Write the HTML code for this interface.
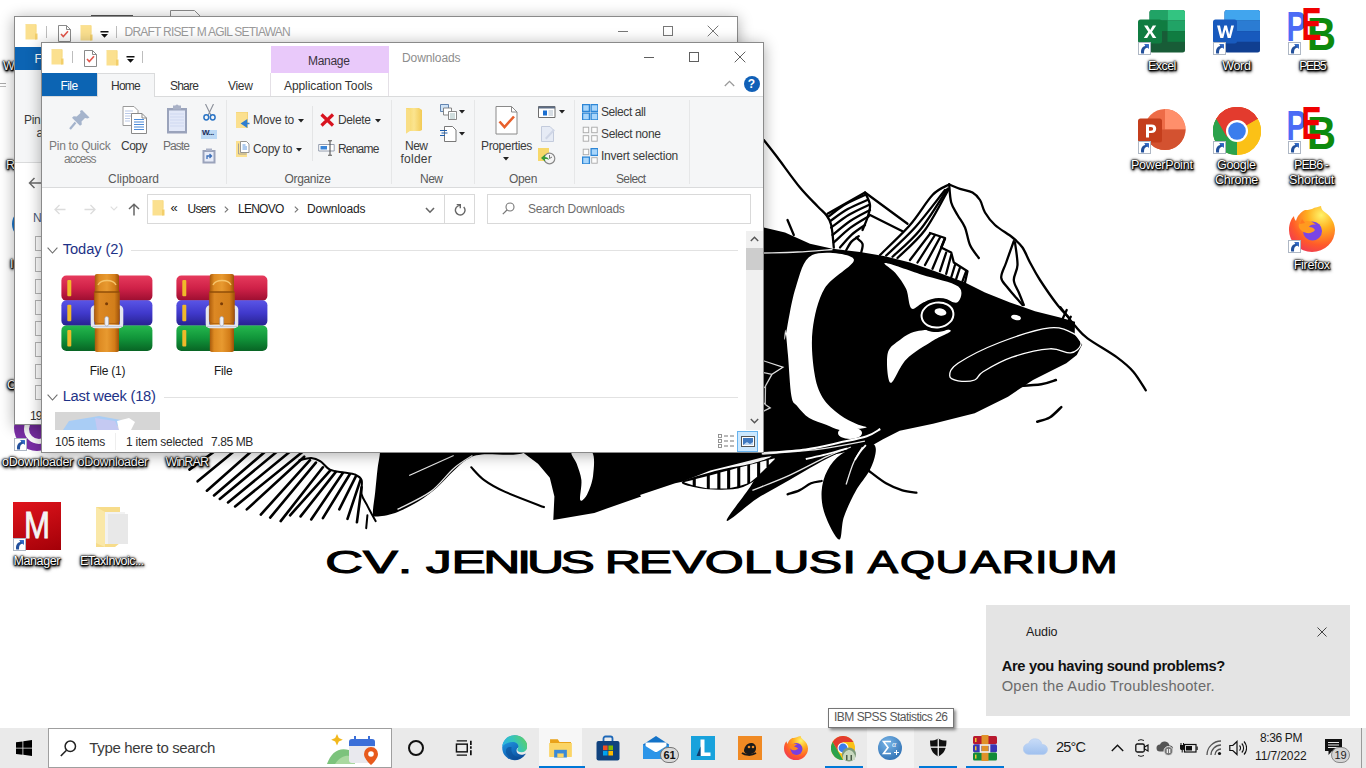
<!DOCTYPE html>
<html lang="en">
<head>
<meta charset="utf-8">
<title>Desktop</title>
<style>
*{box-sizing:border-box;margin:0;padding:0}
html,body{width:1366px;height:768px;overflow:hidden;background:#fff}
body{position:relative;font-family:"Liberation Sans",sans-serif;font-size:12px;color:#1e1e1e}
.abs{position:absolute}
.t{position:absolute;white-space:nowrap;line-height:1}
/* desktop icon label */
.dlab{color:#fff;text-shadow:0 0 1px #000,0 0 2px #000,0 1px 2px #000,1px 1px 1px #000,0 0 3px #000,1px 2px 3px rgba(0,0,0,.9),0 1px 4px rgba(0,0,0,.6)}
.dl{position:absolute;white-space:nowrap;color:#fff;font-size:12.5px;line-height:15px;text-align:center;
 text-shadow:0 0 2px #000,0 0 2px #000,0 1px 2px #000,1px 1px 1px #000,0 0 3px #000}
.sc{position:absolute;width:11px;height:11px;background:#fff;border:1px solid #9aa;}
.sc:after{content:"";position:absolute;left:2px;top:2px;width:5px;height:5px;border-top:2px solid #1d5fb4;border-right:2px solid #1d5fb4}
/* windows */
.win{position:absolute;background:#fff;border:1px solid #8a8a8a;box-shadow:0 2px 14px rgba(0,0,0,.33)}
.rl{color:#444}
.gl{color:#5d5d5d}
.sep{position:absolute;width:1px;background:#e2e3e4}
/* taskbar */
#tb{position:absolute;left:0;top:728px;width:1366px;height:40px;background:#e9e9e9}
</style>
</head>
<body>
<svg class="abs" style="left:0;top:0" width="1366" height="768" viewBox="0 0 1366 768">
<g fill="#000">
<path d="M740.0 222.5 L763.8 227.5 L785.0 232.5 L810.0 243.8 L832.5 248.8 L860.0 252.0 L885.0 256.2 L910.0 262.5 L935.0 271.2 L965.0 282.5 L985.0 292.5 L1010.0 302.5 L1035.0 311.2 L1060.0 317.5 L1075.0 321.8 L1074.7 334.2 L1082.2 344.6 L1076.8 355.0 L1066.3 363.3 L1033.0 380.0 L1008.0 396.7 L974.7 413.3 L933.0 423.8 L899.7 430.8 L883.0 439.2 L866.3 448.8 L846 452 L800 462 L778.2 455.2 L761.8 457.6 L738.4 463.4 L710.3 470.5 L682.2 481.7 L675.1 483.3 L640.0 495.1 L641.1 496.5 L594.3 512.9 L553.3 520.0 L554.4 496.5 L549.8 477.8 L538.0 463.7 L524.0 453.2 L500 440 L480 300 L600 240 L700 228Z"/>
<path d="M381.1 430.9 C356.3 434.6 380.5 446.9 379.9 453.2 C379.3 459.4 378.4 461.9 377.6 468.4 C376.8 474.8 376.0 484.5 375.2 491.9 C374.4 499.3 372.7 508.8 372.9 512.9 C373.1 517.0 372.7 516.4 376.4 516.4 C380.1 516.4 388.1 515.4 395.1 512.9 C402.1 510.4 411.6 505.5 418.6 501.2 C425.6 496.9 431.5 492.3 437.3 487.2 C443.1 482.1 448.6 475.5 453.7 470.8 C458.8 466.1 463.1 461.8 467.8 459.1 C472.5 456.4 472.4 455.5 481.8 454.4 C491.2 453.3 516.2 456.6 524.0 452.7 C531.8 448.8 552.5 434.5 528.7 430.9 C504.9 427.3 405.9 427.2 381.1 430.9Z"/>
<path d="M864.9 440.0 C854.8 440.5 806.1 446.5 789.9 449.8 C773.7 453.1 774.3 453.7 767.7 459.9 C761.1 466.1 756.9 476.8 750.1 486.9 C743.3 497.0 725.5 518.8 726.7 520.8 C727.9 522.8 746.6 505.4 757.1 498.6 C767.6 491.8 779.8 485.7 789.9 479.8 C800.0 473.9 807.9 468.9 818.0 463.4 C828.1 457.9 843.0 450.9 850.8 447.0 C858.6 443.1 875.0 439.5 864.9 440.0Z"/>
<path d="M864.9 443.5 C859.4 445.1 847.8 449.6 841.5 454.1 C835.2 458.6 830.7 464.3 827.4 470.5 C824.1 476.7 822.0 484.1 821.6 491.5 C821.2 498.9 822.2 507.0 825.1 515.0 C828.0 523.0 836.0 539.2 839.1 539.6 C842.2 540.0 841.1 525.3 843.8 517.3 C846.5 509.3 851.2 499.3 855.5 491.5 C859.8 483.7 866.3 476.7 869.6 470.5 C872.9 464.3 874.6 458.4 875.4 454.1 C876.2 449.8 876.0 446.5 874.3 444.7 C872.5 442.9 870.4 441.9 864.9 443.5Z"/>
<path d="M682.2 481.7 C679.1 484.6 692.0 486.7 698.6 488.0 C705.2 489.3 714.6 489.9 722.0 489.7 C729.4 489.5 736.5 489.3 743.1 486.9 C749.7 484.5 755.9 480.2 761.8 475.1 C767.6 470.0 779.8 458.3 778.2 456.4 C776.6 454.4 762.5 461.0 752.4 463.4 C742.2 465.8 729.0 467.4 717.3 470.5 C705.6 473.6 685.3 478.8 682.2 481.7Z"/>
</g><g fill="#fff">
<path d="M812.2 255.0 C802.5 259.9 800.0 274.4 795.5 288.3 C791.0 302.2 786.8 331.4 785.1 338.3 C783.4 345.2 785.0 327.1 785.5 330.0 C786.0 332.9 787.0 344.4 788.0 355.4 C789.0 366.4 789.9 387.5 791.4 396.0 C792.9 404.5 794.3 402.5 797.3 406.2 C800.3 409.9 804.4 414.9 809.2 418.0 C814.0 421.1 821.0 422.8 826.1 424.8 C831.2 426.8 834.6 429.2 839.7 429.9 C844.8 430.6 852.1 429.4 856.6 429.0 C861.1 428.6 866.7 428.1 866.7 427.3 C866.7 426.5 861.1 426.1 856.6 424.0 C852.1 421.9 845.4 419.1 839.7 414.7 C834.1 410.3 826.9 404.8 822.7 397.7 C818.5 390.6 816.0 383.6 814.3 372.3 C812.6 361.0 810.9 344.0 812.6 330.0 C814.3 316.0 817.8 300.1 824.7 288.3 C831.6 276.5 855.9 264.8 853.8 259.2 C851.7 253.6 821.9 250.2 812.2 255.0Z"/>
<path d="M885.4 263.0 C889.8 263.2 909.8 270.8 921.9 274.7 C934.0 278.6 952.3 281.9 958.3 286.5 C964.3 291.1 960.4 299.9 957.8 302.1 C955.2 304.3 948.2 299.5 942.7 299.5 C937.2 299.5 929.7 300.6 924.5 302.1 C919.3 303.6 914.5 310.8 911.5 308.6 C908.5 306.4 908.8 295.0 906.2 289.1 C903.6 283.2 899.3 277.8 895.8 273.4 C892.3 269.0 881.0 262.8 885.4 263.0Z"/>
<path d="M916.7 331.2 C925.4 329.4 947.9 328.5 950.5 330.2 C953.1 331.9 939.7 336.2 932.3 341.1 C924.9 346.0 913.2 352.4 906.2 359.4 C899.2 366.3 893.7 383.7 890.6 382.8 C887.5 381.9 886.2 361.1 887.5 354.2 C888.8 347.2 893.5 344.9 898.4 341.1 C903.3 337.3 908.0 333.0 916.7 331.2Z"/>
<path d="M572.0 452.0 C574.5 450.1 588.4 448.1 591.9 452.0 C595.4 455.9 593.9 468.5 593.1 475.5 C592.3 482.5 589.4 490.1 587.2 494.2 C585.1 498.3 581.2 502.5 580.2 500.1 C579.2 497.8 582.0 486.2 581.4 480.1 C580.8 474.0 578.3 468.4 576.7 463.7 C575.1 459.0 569.5 453.9 572.0 452.0Z"/>
<path d="M684.5 482.0 L692.7 479.9 L692.7 485.3 L684.5 482.4Z"/>
<path d="M695.8 479.1 L706.8 476.2 L706.8 488.3 L695.8 486.1Z"/>
<path d="M709.8 475.4 L717.3 473.4 L717.3 488.5 L709.8 488.5Z"/>
<path d="M720.4 472.6 L727.1 470.8 L727.1 488.4 L720.4 488.5Z"/>
<path d="M730.2 470.0 L737.2 468.1 L737.2 486.6 L730.2 488.0Z"/>
<path d="M740.3 467.3 L747.3 465.5 L747.3 483.5 L740.3 485.8Z"/>
<path d="M750.1 464.7 L757.1 462.9 L757.1 476.8 L750.1 482.4Z"/>
<path d="M760.2 462.1 L766.5 460.4 L766.5 467.4 L760.2 473.7Z"/>
<path d="M768.8 459.8 L774.7 458.3 L774.7 459.2 L768.8 465.1Z"/>
<ellipse cx="850" cy="433" rx="12" ry="6"/>
<ellipse cx="1016" cy="317.5" rx="5" ry="2.5" transform="rotate(15 1016 317.5)"/>
</g>
<ellipse cx="937.5" cy="315" rx="21" ry="17" fill="#000" transform="rotate(-8 937.5 315)"/><ellipse cx="937.5" cy="315" rx="16" ry="12.5" fill="none" stroke="#fff" stroke-width="2" transform="rotate(-8 937.5 315)"/><ellipse cx="940.5" cy="312" rx="6" ry="3.6" fill="#fff" transform="rotate(12 940.5 312)"/>
<path d="M949.7 375.8 C949.7 372.9 949.7 368.9 958.0 363.3 C966.3 357.8 984.4 348.4 999.7 342.5 C1015.0 336.6 1037.2 329.3 1049.7 327.9 C1062.2 326.5 1069.5 331.4 1074.7 334.2 C1079.9 337.0 1081.6 341.5 1080.9 344.6 C1080.2 347.7 1075.7 352.2 1070.5 352.9 C1065.3 353.6 1059.4 348.1 1049.7 348.8 C1040.0 349.5 1023.3 353.3 1012.2 357.1 C1001.1 360.9 989.2 367.9 983.0 371.7 C976.8 375.5 978.9 378.5 974.7 380.0 C970.5 381.5 962.2 381.5 958.0 380.8 C953.8 380.1 949.7 378.7 949.7 375.8Z" fill="none" stroke="#fff" stroke-width="1.3"/>
<path d="M409.2 475.5 L453.7 455.5" fill="none" stroke="#e6e6e6" stroke-width="1.3"/>
<path d="M397.5 509.4 C403.0 506.5 420.9 498.7 430.3 491.9 C439.7 485.1 446.7 474.5 453.7 468.4 C460.7 462.3 469.3 457.6 472.4 455.5" fill="none" stroke="#e6e6e6" stroke-width="1.3"/>
<path d="M761.8 454.1 C771.2 453.3 800.8 451.5 818.0 449.4 C835.2 447.2 857.1 442.6 864.9 441.2" fill="none" stroke="#e6e6e6" stroke-width="1.3"/>
<path d="M752.4 490.4 C758.6 487.8 777.4 480.8 789.9 475.1 C802.4 469.4 817.2 461.1 827.4 456.4 C837.5 451.7 846.9 448.6 850.8 447.0" fill="none" stroke="#e6e6e6" stroke-width="1.3"/>
<path d="M846.1 484.5 C847.3 481.0 850.5 469.6 853.2 463.4 C855.9 457.1 861.0 449.7 862.5 447.0" fill="none" stroke="#e6e6e6" stroke-width="1.3"/>
<path d="M763.8 253.0 C769.4 252.8 786.0 252.6 797.5 252.0 C809.0 251.4 826.7 249.9 832.5 249.5" fill="none" stroke="#e6e6e6" stroke-width="1.3"/>
<path d="M762.6 360.5 L782.9 367.2 L771.9 374.4 L762.6 372.3" fill="none" stroke="#e6e6e6" stroke-width="1.3"/>
<path d="M771.9 374.4 L765.5 385.9 L765.2 404.5 L770.2 407.9 L762.6 411.6" fill="none" stroke="#e6e6e6" stroke-width="1.3"/>
<path d="M762.6 388.4 L765.5 386.7" fill="none" stroke="#e6e6e6" stroke-width="1.3"/>
<path d="M762.6 402.8 L765.2 403.6" fill="none" stroke="#e6e6e6" stroke-width="1.3"/>
<path d="M761.8 453.1 C769.1 452.5 792.8 451.1 805.8 449.4 C818.8 447.6 829.6 444.8 839.7 442.6 C849.9 440.4 859.9 438.6 866.7 436.3 C873.5 434.0 878.0 430.2 880.3 429.0" fill="none" stroke="#fff" stroke-width="2.0"/>
<path d="M805.8 459.0 C809.2 458.2 819.2 456.1 826.1 454.4 C833.0 452.6 843.8 449.5 847.3 448.5" fill="none" stroke="#fff" stroke-width="1.8"/>
<path d="M854.9 460.0 C855.8 458.6 858.2 454.4 860.0 451.9 C861.8 449.4 864.9 446.2 865.9 445.1" fill="none" stroke="#fff" stroke-width="1.8"/>
<g fill="none" stroke="#000" stroke-linecap="round" stroke-linejoin="round">
<path d="M763.8 140.0 C766.1 142.9 771.5 149.6 777.5 157.5 C783.5 165.4 793.3 179.4 800.0 187.5 C806.7 195.6 813.1 201.6 817.5 206.2 C821.9 210.8 823.9 211.9 826.2 215.0 C828.5 218.1 829.9 219.6 831.2 225.0 C832.5 230.4 833.4 243.8 833.8 247.5" stroke-width="2.3"/>
<path d="M827.5 213.8 L865.0 192.5 L907.5 223.8" stroke-width="2.3"/>
<path d="M870.0 215.0 L902.5 231.2" stroke-width="2.3"/>
<path d="M828.8 216.2 C831.6 214.2 839.9 207.6 845.9 204.1 C851.9 200.6 861.8 196.5 865.0 195.0" stroke-width="2.3"/>
<path d="M830.0 221.2 C833.0 219.2 841.5 212.6 847.8 209.1 C854.0 205.6 864.2 201.5 867.5 200.0" stroke-width="2.3"/>
<path d="M831.2 227.5 C834.2 225.4 842.7 218.6 849.0 214.8 C855.3 211.1 865.5 206.6 868.8 205.0" stroke-width="2.3"/>
<path d="M832.5 235.0 C835.5 232.7 844.0 225.2 850.2 221.0 C856.5 216.8 866.7 211.8 870.0 210.0" stroke-width="2.3"/>
<path d="M833.8 242.5 C836.5 240.1 844.4 232.3 850.2 227.9 C856.0 223.5 865.7 218.1 868.8 216.2" stroke-width="2.3"/>
<path d="M840.0 247.5 C841.9 245.4 847.3 238.6 851.5 234.8 C855.7 231.1 862.8 226.6 865.0 225.0" stroke-width="2.3"/>
<path d="M846.2 250.0 C847.1 248.6 849.4 243.9 851.5 241.6 C853.6 239.3 857.6 237.1 858.8 236.2" stroke-width="2.3"/>
<path d="M865.0 192.5 C865.8 194.6 869.6 200.8 870.0 205.0 C870.4 209.2 868.8 213.3 867.5 217.5 C866.2 221.7 863.3 227.9 862.5 230.0" stroke-width="2.3"/>
<path d="M856.2 237.5 C857.2 238.6 861.7 241.3 862.5 243.8 C863.3 246.3 861.4 251.1 861.2 252.5" stroke-width="2.3"/>
<path d="M880.0 255.0 C885.0 250.0 901.2 235.0 910.0 225.0 C918.8 215.0 926.0 201.8 932.5 195.0 C939.0 188.2 946.4 186.2 949.2 184.5" stroke-width="2.3"/>
<path d="M886.2 255.5 C891.0 250.8 905.2 238.4 915.0 227.5 C924.8 216.6 940.0 196.2 945.0 190.0" stroke-width="2.3"/>
<path d="M892.5 256.8 C897.1 252.3 910.8 241.3 920.0 230.0 C929.2 218.7 942.9 195.7 947.5 188.8" stroke-width="2.3"/>
<path d="M897.5 258.0 C902.1 253.3 916.5 241.5 925.0 230.0 C933.5 218.5 944.8 195.7 948.8 188.8" stroke-width="2.3"/>
<path d="M949.2 184.5 C949.5 187.5 949.8 197.4 951.2 202.5 C952.6 207.6 955.2 210.8 957.5 215.0 C959.8 219.2 962.9 222.5 965.0 227.5 C967.1 232.5 967.7 239.9 970.0 245.0 C972.3 250.1 977.3 255.8 978.8 258.0" stroke-width="2.3"/>
<path d="M949.2 184.5 C951.0 185.2 956.1 187.5 960.0 188.8 C963.9 190.1 969.2 190.6 972.5 192.5 C975.8 194.4 977.9 196.7 980.0 200.0 C982.1 203.3 982.5 208.3 985.0 212.5 C987.5 216.7 990.4 220.8 995.0 225.0 C999.6 229.2 1007.9 233.8 1012.5 237.5 C1017.1 241.2 1019.6 243.3 1022.5 247.5 C1025.4 251.7 1027.1 257.1 1030.0 262.5 C1032.9 267.9 1035.4 272.9 1040.0 280.0 C1044.6 287.1 1052.7 298.8 1057.5 305.0 C1062.3 311.2 1066.9 315.4 1068.8 317.5" stroke-width="2.3"/>
<path d="M1013.8 241.2 C1012.5 244.8 1008.3 256.4 1006.2 262.5 C1004.1 268.6 1001.0 273.3 1001.2 277.5 C1001.4 281.7 1004.0 282.9 1007.5 287.5 C1011.0 292.1 1020.0 302.1 1022.5 305.0" stroke-width="2.3"/>
<path d="M1015.0 242.5 C1015.4 246.2 1017.7 258.8 1017.5 265.0 C1017.3 271.2 1013.6 275.4 1013.8 280.0 C1014.0 284.6 1017.1 288.3 1018.8 292.5 C1020.5 296.7 1023.0 302.9 1023.8 305.0" stroke-width="2.3"/>
<path d="M1060.4 307.1 C1062.8 310.2 1070.5 320.6 1075.0 325.8 C1079.5 331.0 1080.5 333.1 1087.5 338.3 C1094.5 343.5 1109.1 351.5 1116.7 357.1 C1124.3 362.7 1128.5 366.1 1133.3 371.7 C1138.1 377.2 1143.7 387.3 1145.8 390.4" stroke-width="2.3"/>
<path d="M1066.7 310.0 L1061.7 320.8" stroke-width="2.3"/>
<path d="M1070.8 316.7 L1065.8 325.8" stroke-width="2.3"/>
<path d="M930.0 233.8 L910.0 260.0" stroke-width="2.3"/>
<path d="M935.0 235.0 L917.5 262.5" stroke-width="2.3"/>
<path d="M940.0 237.5 L925.0 265.0" stroke-width="2.3"/>
<path d="M945.0 238.8 L932.5 268.8" stroke-width="2.3"/>
<path d="M946.2 252.5 L940.0 271.2" stroke-width="2.3"/>
<path d="M951.2 255.0 L946.2 273.8" stroke-width="2.3"/>
<path d="M955.0 265.0 L951.2 277.5" stroke-width="2.3"/>
<path d="M960.0 267.5 L956.2 278.8" stroke-width="2.3"/>
<path d="M966.2 271.2 L962.5 281.2" stroke-width="2.3"/>
<path d="M930.0 233.0 L945.0 238.0 L941.2 247.5 L951.2 252.5 L953.8 262.5 L967.5 271.2 L965.0 282.5" stroke-width="2.3"/>
<path d="M787.5 220.0 L793.8 235.0" stroke-width="2.3"/>
<path d="M1016.3 386.2 C1020.5 385.9 1034.7 385.2 1041.3 384.2 C1047.9 383.2 1053.5 380.7 1055.9 380.0" stroke-width="2.5"/>
<path d="M1037.2 421.7 C1039.3 421.0 1045.7 419.9 1049.7 417.5 C1053.7 415.1 1059.4 408.8 1061.3 407.1" stroke-width="2.5"/>
<path d="M216.8 449.8 L189.4 469.6" stroke-width="2.6"/>
<path d="M240.2 446.3 L197.6 481.3" stroke-width="2.6"/>
<path d="M260.2 443.5 L206.9 490.7" stroke-width="2.6"/>
<path d="M276.4 442.1 L214.0 495.4" stroke-width="2.6"/>
<path d="M289.9 441.0 L219.8 498.9" stroke-width="2.6"/>
<path d="M304.2 440.0 L228.0 502.4" stroke-width="2.6"/>
<path d="M318.8 438.8 L235.1 506.4" stroke-width="2.6"/>
<path d="M304.2 456.7 L246.8 509.4" stroke-width="2.6"/>
<path d="M310.0 460.2 L260.8 514.6" stroke-width="2.6"/>
<path d="M315.9 462.6 L270.2 517.6" stroke-width="2.6"/>
<path d="M322.9 467.3 L280.7 521.1" stroke-width="2.6"/>
<path d="M329.9 470.8 L290.1 515.3" stroke-width="2.6"/>
<path d="M335.8 471.9 L300.6 516.4" stroke-width="2.6"/>
<path d="M342.8 473.1 L311.2 519.5" stroke-width="2.6"/>
<path d="M349.8 474.3 L322.9 518.1" stroke-width="2.6"/>
<path d="M355.7 476.6 L339.3 509.4" stroke-width="2.6"/>
<path d="M360.4 480.1 L347.5 518.8" stroke-width="2.6"/>
<path d="M361.6 487.2 L356.9 522.3" stroke-width="2.6"/>
<path d="M299.5 460.2 C301.4 459.8 307.7 457.7 311.2 457.9 C314.7 458.1 317.5 459.4 320.6 461.4 C323.7 463.3 326.0 467.7 329.9 469.6 C333.8 471.5 339.9 471.8 344.0 472.6 C348.1 473.4 351.6 473.1 354.5 474.3 C357.4 475.6 360.4 476.8 361.6 480.1 C362.8 483.4 360.6 489.9 361.6 494.2 C362.6 498.5 365.1 501.4 367.4 505.9 C369.7 510.4 374.2 518.6 375.6 521.1" stroke-width="2.0"/>
<path d="M367.4 515.3 L366.2 528.2" stroke-width="2.0"/>
<path d="M471.3 467.3 C473.4 469.4 478.6 476.0 484.2 480.1 C489.8 484.2 495.2 487.4 505.2 491.9 C515.1 496.4 537.4 504.6 543.9 507.1" stroke-width="2.1"/>
<path d="M787.6 494.3 C789.5 493.6 795.4 492.2 799.3 490.4 C803.2 488.6 807.3 484.9 811.0 483.3 C814.7 481.7 819.8 481.4 821.6 481.0" stroke-width="2.3"/>
<path d="M868.4 470.5 C871.3 472.6 880.3 480.0 886.0 483.3 C891.7 486.6 897.3 488.8 902.4 490.4 C907.5 492.0 914.1 492.3 916.4 492.7" stroke-width="2.3"/>
</g>
<text transform="scale(1.6479,1)" x="197.34 220.30 241.36" y="572.8" font-family="'Liberation Sans',sans-serif" font-size="31.7" fill="#000" stroke="#000" stroke-width="1.06">CV.</text>
<text transform="scale(1.6219,1)" x="262.63 278.34 298.01 318.81 324.91 345.62" y="572.8" font-family="'Liberation Sans',sans-serif" font-size="31.7" fill="#000" stroke="#000" stroke-width="1.07">JENIUS</text>
<text transform="scale(1.5816,1)" x="382.40 403.94 425.31 445.55 470.22 488.87 511.36 532.57" y="572.8" font-family="'Liberation Sans',sans-serif" font-size="31.7" fill="#000" stroke="#000" stroke-width="1.08">REVOLUSI</text>
<text transform="scale(1.4219,1)" x="610.29 633.02 658.01 682.55 704.60 727.92 736.29 759.59" y="572.8" font-family="'Liberation Sans',sans-serif" font-size="31.7" fill="#000" stroke="#000" stroke-width="1.16">AQUARIUM</text>
</svg>
<div id="di"><svg class="abs" style="left:170px;top:10px" width="36" height="12" viewBox="0 0 36 12"><path d="M.500 12V.500h24l10 10V12" fill="#fff" stroke="#8a8a8a"/></svg>
<div class="abs" style="left:91px;top:15px;width:42px;height:2px;background:#555;"></div>
<div class="t dlab" style="left:3.0px;top:59.8px;font-size:12.5px;letter-spacing:-0.30px;color:#fff;">W</div>
<div class="abs" style="left:0px;top:83px;width:6px;height:1px;background:#aaa;"></div>
<div class="abs" style="left:0px;top:86px;width:6px;height:1px;background:#bbb;"></div>
<div class="t dlab" style="left:6.0px;top:158.8px;font-size:12.5px;letter-spacing:0.97px;color:#fff;">R</div>
<div class="abs" style="left:11.500px;top:208px;width:32px;height:32px;border-radius:16px;background:#1a73c8"></div>
<div class="t dlab" style="left:10.0px;top:257.8px;font-size:12.5px;letter-spacing:0.53px;color:#fff;">I</div>
<div class="t dlab" style="left:7.0px;top:378.8px;font-size:12.5px;letter-spacing:0.97px;color:#fff;">C</div>
<div class="abs" style="left:14px;top:405px;width:46px;height:46px;border-radius:23px;background:#7a2ea6"></div>
<div class="abs" style="left:24px;top:414px;width:30px;height:30px;border-radius:15px;border:5px solid #fff"></div>
<svg class="abs" style="left:14px;top:438px" width="13" height="13" viewBox="0 0 13 13"><rect x=".500" y=".500" width="12" height="12" fill="#fff" stroke="#aeb7c4"/><path d="M3.200 11.500C2.500 7.500 4 4.500 7.500 4L6.300 2.200h4.500v4.600L9.300 5.600C7 6.200 5.800 8 6 11.500z" fill="#22509c"/><path d="M6.300 2.200h4.500v4.600" fill="#2e68c8"/></svg>
<div class="t dlab" style="left:2.0px;top:455.8px;font-size:12.5px;letter-spacing:-0.24px;color:#fff;">oDownloader</div>
<div class="t dlab" style="left:77.5px;top:455.8px;font-size:12.5px;letter-spacing:-0.29px;color:#fff;">oDownloader</div>
<div class="t dlab" style="left:165.6px;top:455.8px;font-size:12.5px;letter-spacing:-0.92px;color:#fff;">WinRAR</div>
<div class="abs" style="left:13px;top:502px;width:48px;height:48px;background:linear-gradient(160deg,#e0141c,#a30008)"></div>
<svg class="abs" style="left:13px;top:502px" width="48" height="48" viewBox="0 0 48 48"><text x="11" y="36" font-family="'Liberation Sans',sans-serif" font-size="36" textLength="26" lengthAdjust="spacingAndGlyphs" fill="#f4f4f4" stroke="#f4f4f4" stroke-width=".8">M</text></svg>
<svg class="abs" style="left:13px;top:538px" width="13" height="13" viewBox="0 0 13 13"><rect x=".500" y=".500" width="12" height="12" fill="#fff" stroke="#aeb7c4"/><path d="M3.200 11.500C2.500 7.500 4 4.500 7.500 4L6.300 2.200h4.500v4.600L9.300 5.600C7 6.200 5.800 8 6 11.500z" fill="#22509c"/><path d="M6.300 2.200h4.500v4.600" fill="#2e68c8"/></svg>
<div class="t dlab" style="left:13.5px;top:555.3px;font-size:12.5px;letter-spacing:-0.40px;color:#fff;">Manager</div>
<svg class="abs" style="left:95px;top:505px" width="34" height="43" viewBox="0 0 34 43"><path d="M1 2h24v36l-5 4h-19z" fill="#f7dc8a"/><path d="M10 7h20v32h-20z" fill="#f2f2f2"/><path d="M13 9h20v30h-20z" fill="#e8e8e8"/><path d="M1 2l9 5v35l-9-4z" fill="#fae8a8"/></svg>
<div class="t dlab" style="left:80.0px;top:555.3px;font-size:12.5px;letter-spacing:-0.55px;color:#fff;">ETaxInvoic...</div>
<svg class="abs" style="left:1138px;top:10px" width="47" height="43" viewBox="0 0 47 43"><rect x="11.500" y="0" width="35.500" height="42.500" rx="2.500" fill="#185c37"/><path d="M11.500 2.500a2.500 2.500 0 0 1 2.500-2.500h15.500v10.600h-18z" fill="#21a366"/><path d="M29.500 0h15a2.500 2.500 0 0 1 2.500 2.500v8.100h-17.500z" fill="#33c481"/><path d="M11.500 10.600h18v10.600h-18z" fill="#107c41"/><path d="M29.500 10.600h17.500v10.600h-17.500z" fill="#21a366"/><path d="M11.500 21.200h18v10.600h-18z" fill="#185c37"/><path d="M29.500 21.200h17.500v10.600h-17.500z" fill="#107c41"/><rect x="0" y="9.500" width="24" height="24" rx="2.500" fill="#107c41"/><path d="M6 15.500h3.600l2.600 4.500 2.600-4.500h3.400l-4.200 6.200 4.400 6.300h-3.600l-2.800-4.700-2.800 4.700h-3.400l4.400-6.300z" fill="#fff"/></svg>
<svg class="abs" style="left:1138px;top:42px" width="13" height="13" viewBox="0 0 13 13"><rect x=".500" y=".500" width="12" height="12" fill="#fff" stroke="#aeb7c4"/><path d="M3.200 11.500C2.500 7.500 4 4.500 7.500 4L6.300 2.200h4.500v4.600L9.300 5.600C7 6.200 5.800 8 6 11.500z" fill="#22509c"/><path d="M6.300 2.200h4.500v4.600" fill="#2e68c8"/></svg>
<div class="t dlab" style="left:1148.0px;top:59.8px;font-size:12.5px;letter-spacing:-0.55px;color:#fff;">Excel</div>
<svg class="abs" style="left:1213px;top:10px" width="47" height="43" viewBox="0 0 47 43"><rect x="11.500" y="0" width="35.500" height="42.500" rx="2.500" fill="#103f91"/><path d="M11.500 2.500a2.500 2.500 0 0 1 2.500-2.500h30.500a2.500 2.500 0 0 1 2.500 2.500v8.100h-35.500z" fill="#41a5ee"/><path d="M11.500 10.600h35.500v10.600h-35.500z" fill="#2b7cd3"/><path d="M11.500 21.200h35.500v10.600h-35.500z" fill="#185abd"/><rect x="0" y="9.500" width="24" height="24" rx="2.500" fill="#185abd"/><path d="M4 15.500h3l2 9 2.300-9h2.600l2.300 9 2-9h2.800l-3.300 12.500h-3l-2.200-8.500-2.200 8.500h-3z" fill="#fff"/></svg>
<svg class="abs" style="left:1213px;top:42px" width="13" height="13" viewBox="0 0 13 13"><rect x=".500" y=".500" width="12" height="12" fill="#fff" stroke="#aeb7c4"/><path d="M3.200 11.500C2.500 7.500 4 4.500 7.500 4L6.300 2.200h4.500v4.600L9.300 5.600C7 6.200 5.800 8 6 11.500z" fill="#22509c"/><path d="M6.300 2.200h4.500v4.600" fill="#2e68c8"/></svg>
<div class="t dlab" style="left:1222.3px;top:59.8px;font-size:12.5px;letter-spacing:-0.36px;color:#fff;">Word</div>
<svg class="abs" style="left:1288px;top:6px" width="48" height="46" viewBox="0 0 48 46" font-family="'Liberation Sans',sans-serif" font-weight="bold"><text x="-1.500" y="34.500" font-size="42" fill="#4b6bf5" textLength="20" lengthAdjust="spacingAndGlyphs">P</text><text x="19" y="44.400" font-size="46" fill="#0d8a0d" textLength="29" lengthAdjust="spacingAndGlyphs">B</text><text x="13.500" y="33.600" font-size="46" fill="#f00000" textLength="20" lengthAdjust="spacingAndGlyphs">E</text></svg>
<svg class="abs" style="left:1288px;top:42px" width="13" height="13" viewBox="0 0 13 13"><rect x=".500" y=".500" width="12" height="12" fill="#fff" stroke="#aeb7c4"/><path d="M3.200 11.500C2.500 7.500 4 4.500 7.500 4L6.300 2.200h4.500v4.600L9.300 5.600C7 6.200 5.800 8 6 11.500z" fill="#22509c"/><path d="M6.300 2.200h4.500v4.600" fill="#2e68c8"/></svg>
<div class="t dlab" style="left:1299.2px;top:59.8px;font-size:12.5px;letter-spacing:-1.47px;color:#fff;">PEB5</div>
<svg class="abs" style="left:1137.5px;top:108.5px" width="50" height="43" viewBox="0 0 50 43"><circle cx="27" cy="20.500" r="20.500" fill="#ed6c47"/><path d="M27 0a20.500 20.500 0 0 1 20.500 20.500h-20.500z" fill="#ff8f6b"/><path d="M6.500 20.500h41a20.500 20.500 0 0 1-41 0z" fill="#d35230"/><rect x="0" y="9.500" width="24" height="24" rx="2.500" fill="#c43e1c"/><path d="M8 15.500h5.500c3 0 4.700 1.500 4.700 4.200s-2 4.300-4.900 4.300h-2.300v4.500h-3zm3 2.400v3.800h2c1.400 0 2.100-.7 2.100-1.900s-.7-1.900-2.100-1.900z" fill="#fff"/></svg>
<svg class="abs" style="left:1138px;top:141px" width="13" height="13" viewBox="0 0 13 13"><rect x=".500" y=".500" width="12" height="12" fill="#fff" stroke="#aeb7c4"/><path d="M3.200 11.500C2.500 7.500 4 4.500 7.500 4L6.300 2.200h4.500v4.600L9.300 5.600C7 6.200 5.800 8 6 11.500z" fill="#22509c"/><path d="M6.300 2.200h4.500v4.600" fill="#2e68c8"/></svg>
<div class="t dlab" style="left:1131.0px;top:158.8px;font-size:12.5px;letter-spacing:-0.23px;color:#fff;">PowerPoint</div>
<svg class="abs" style="left:1212.6px;top:106.7px" width="48" height="48" viewBox="0 0 48 48"><circle cx="24" cy="24" r="24" fill="#fbc116"/><path d="M24 24L3.200 12A24 24 0 0 1 44.800 12z" fill="#e33b2e"/><path d="M24 24L3.200 12A24 24 0 0 0 24 48l10.400-18z" fill="#2ba24c" /><path d="M3.200 12A24 24 0 0 1 44.800 12H24z" fill="#e33b2e"/><path d="M24 24l20.800-12A24 24 0 0 1 24 48z" fill="#fbc116"/><path d="M24 12h20.800A24 24 0 0 0 3.200 12L13.600 30z" fill="#e33b2e"/><path d="M3.200 12l10.400 18L24 48A24 24 0 0 1 3.200 12z" fill="#2ba24c"/><path d="M13.600 30L24 48l10.400-18z" fill="#2ba24c" opacity="0"/><circle cx="24" cy="24" r="11" fill="#fff"/><circle cx="24" cy="24" r="8.800" fill="#3b7ded"/></svg>
<svg class="abs" style="left:1213px;top:141px" width="13" height="13" viewBox="0 0 13 13"><rect x=".500" y=".500" width="12" height="12" fill="#fff" stroke="#aeb7c4"/><path d="M3.200 11.500C2.500 7.500 4 4.500 7.500 4L6.300 2.200h4.500v4.600L9.300 5.600C7 6.200 5.800 8 6 11.500z" fill="#22509c"/><path d="M6.300 2.200h4.500v4.600" fill="#2e68c8"/></svg>
<div class="t dlab" style="left:1217.0px;top:158.8px;font-size:12.5px;letter-spacing:-0.28px;color:#fff;">Google</div>
<div class="t dlab" style="left:1215.0px;top:174.1px;font-size:12.5px;letter-spacing:-0.24px;color:#fff;">Chrome</div>
<svg class="abs" style="left:1288px;top:104.5px" width="48" height="46" viewBox="0 0 48 46" font-family="'Liberation Sans',sans-serif" font-weight="bold"><text x="-1.500" y="34.500" font-size="42" fill="#4b6bf5" textLength="20" lengthAdjust="spacingAndGlyphs">P</text><text x="19" y="44.400" font-size="46" fill="#0d8a0d" textLength="29" lengthAdjust="spacingAndGlyphs">B</text><text x="13.500" y="33.600" font-size="46" fill="#f00000" textLength="20" lengthAdjust="spacingAndGlyphs">E</text></svg>
<svg class="abs" style="left:1288px;top:141px" width="13" height="13" viewBox="0 0 13 13"><rect x=".500" y=".500" width="12" height="12" fill="#fff" stroke="#aeb7c4"/><path d="M3.200 11.500C2.500 7.500 4 4.500 7.500 4L6.300 2.200h4.500v4.600L9.300 5.600C7 6.200 5.800 8 6 11.500z" fill="#22509c"/><path d="M6.300 2.200h4.500v4.600" fill="#2e68c8"/></svg>
<div class="t dlab" style="left:1294.0px;top:158.8px;font-size:12.5px;letter-spacing:-0.93px;color:#fff;">PEB6 -</div>
<div class="t dlab" style="left:1289.0px;top:174.1px;font-size:12.5px;letter-spacing:-0.19px;color:#fff;">Shortcut</div>
<svg class="abs" style="left:1289px;top:206px" width="46" height="46" viewBox="0 0 46 46"><defs><radialGradient id="ffg" cx=".7" cy=".2" r="1"><stop offset="0" stop-color="#fff36b"/><stop offset=".3" stop-color="#ffb01f"/><stop offset=".65" stop-color="#ff5a2a"/><stop offset="1" stop-color="#e82a6a"/></radialGradient></defs><path d="M23 3c3-2 7-2 9-3 0 3 2 5 5 7 5 4 9 10 9 17a23 22 0 0 1-46 0c0-6 2-11 5-14 0 2 1 4 2 5 1-5 5-9 9-11 1 0 4 0 7-1z" fill="url(#ffg)"/><circle cx="23.500" cy="25" r="9.500" fill="#7a45e6"/><path d="M10 18c3-3 8-4 13-2 2 1 3 2 4 3-3-1-6 0-7 2 3 0 5 1 6 3-3 4-9 4-13 1-3-2-4-5-3-7z" fill="#ff9a1f"/><path d="M13 13l3 4-5 1z" fill="#ff7a1f"/></svg>
<svg class="abs" style="left:1288px;top:240px" width="13" height="13" viewBox="0 0 13 13"><rect x=".500" y=".500" width="12" height="12" fill="#fff" stroke="#aeb7c4"/><path d="M3.200 11.500C2.500 7.500 4 4.500 7.500 4L6.300 2.200h4.500v4.600L9.300 5.600C7 6.200 5.800 8 6 11.500z" fill="#22509c"/><path d="M6.300 2.200h4.500v4.600" fill="#2e68c8"/></svg>
<div class="t dlab" style="left:1293.8px;top:258.8px;font-size:12.5px;letter-spacing:-0.33px;color:#fff;">Firefox</div></div>
<div id="bw"><div class="win" style="left:14px;top:16px;width:724px;height:409px"></div>
<svg class="abs" style="left:25px;top:23.5px" width="13" height="16" viewBox="0 0 13 16"><path d="M0.5 0.5h11v15h-11z" fill="#fbe08f"/><path d="M10 9.5h2.5v6h-2.5z" fill="#f3cf6a"/><path d="M0.5 0.5h10.5v8" fill="none" stroke="#f6d67a" stroke-width=".6"/></svg><div class="abs" style="left:46px;top:25.5px;width:1px;height:12px;background:#bdbdbd;"></div><svg class="abs" style="left:58px;top:24.5px" width="13" height="17" viewBox="0 0 13 17"><path d="M.5 .5h8l4 4v12h-12z" fill="#fff" stroke="#7d7d7d" stroke-width=".9"/><path d="M8.500 .5v4h4" fill="none" stroke="#7d7d7d" stroke-width=".9"/><path d="M3 9l2.3 2.6L10 6.3" fill="none" stroke="#e2574c" stroke-width="1.6"/></svg><svg class="abs" style="left:80px;top:24.5px" width="13" height="16" viewBox="0 0 13 16"><path d="M0.5 0.5h11v15h-11z" fill="#fbe08f"/><path d="M10 9.5h2.5v6h-2.5z" fill="#f3cf6a"/><path d="M0.5 0.5h10.5v8" fill="none" stroke="#f6d67a" stroke-width=".6"/></svg><svg class="abs" style="left:100px;top:30.5px" width="9" height="7" viewBox="0 0 9 7"><path d="M0.5 0h8v1.4h-8z M1 3h7l-3.5 3.8z" fill="#111"/></svg><div class="abs" style="left:116px;top:25.5px;width:1px;height:12px;background:#bdbdbd;"></div>
<div class="t" style="left:124.5px;top:26.1px;font-size:12px;letter-spacing:-0.77px;color:#9b9b9b;">DRAFT RISET M AGIL SETIAWAN</div>
<div class="abs" style="left:618px;top:31px;width:10px;height:1px;background:#777;"></div><div class="abs" style="left:663px;top:26px;width:10px;height:10px;border:1px solid #777;"></div><svg class="abs" style="left:707px;top:25px" width="12" height="12" viewBox="0 0 12 12"><path d="M0.7 0.7L11.3 11.3M11.3 0.7L0.7 11.3" stroke="#777" stroke-width="1" fill="none"/></svg>
<div class="abs" style="left:15px;top:47px;width:40px;height:23px;background:#0c64b3;"></div>
<div class="t" style="left:34.5px;top:53.1px;font-size:12px;letter-spacing:-1.83px;color:#fff;">F</div>
<div class="abs" style="left:15px;top:70px;width:722px;height:93px;background:#f5f6f7;border-bottom:1px solid #dadbdc;"></div>
<div class="t" style="left:24.0px;top:114.1px;font-size:12px;letter-spacing:-0.28px;color:#3b3b3b;">Pin</div>
<div class="t" style="left:36.5px;top:127.1px;font-size:12px;letter-spacing:-1.17px;color:#3b3b3b;">a</div>
<svg class="abs" style="left:28px;top:177px" width="14" height="12" viewBox="0 0 14 12"><path d="M14 6H1.500M6.500 1L1.500 6l5 5" stroke="#6a6a6a" stroke-width="1.500" fill="none"/></svg>
<div class="t" style="left:33.0px;top:212.1px;font-size:12px;letter-spacing:-0.17px;color:#4a5a7a;">N</div>
<div class="abs" style="left:35px;top:236px;width:8px;height:15px;background:#fff;border:1px solid #b5b5b5;"></div>
<div class="abs" style="left:35px;top:257px;width:8px;height:15px;background:#fff;border:1px solid #b5b5b5;"></div>
<div class="abs" style="left:35px;top:279px;width:8px;height:15px;background:#fff;border:1px solid #b5b5b5;"></div>
<div class="abs" style="left:35px;top:300px;width:8px;height:15px;background:#fff;border:1px solid #b5b5b5;"></div>
<div class="abs" style="left:35px;top:321px;width:8px;height:15px;background:#fff;border:1px solid #b5b5b5;"></div>
<div class="abs" style="left:35px;top:342px;width:8px;height:15px;background:#fff;border:1px solid #b5b5b5;"></div>
<div class="abs" style="left:35px;top:364px;width:8px;height:15px;background:#fff;border:1px solid #b5b5b5;"></div>
<div class="abs" style="left:35px;top:385px;width:8px;height:15px;background:#fff;border:1px solid #b5b5b5;"></div>
<div class="t" style="left:30.0px;top:409.6px;font-size:12px;letter-spacing:-0.92px;color:#333;">19</div></div>
<div id="fw"><div class="win" style="left:41px;top:42px;width:723px;height:411px"></div>
<svg class="abs" style="left:51px;top:49px" width="13" height="16" viewBox="0 0 13 16"><path d="M0.5 0.5h11v15h-11z" fill="#fbe08f"/><path d="M10 9.5h2.5v6h-2.5z" fill="#f3cf6a"/><path d="M0.5 0.5h10.5v8" fill="none" stroke="#f6d67a" stroke-width=".6"/></svg><div class="abs" style="left:72px;top:51px;width:1px;height:12px;background:#bdbdbd;"></div><svg class="abs" style="left:84px;top:50px" width="13" height="17" viewBox="0 0 13 17"><path d="M.5 .5h8l4 4v12h-12z" fill="#fff" stroke="#7d7d7d" stroke-width=".9"/><path d="M8.500 .5v4h4" fill="none" stroke="#7d7d7d" stroke-width=".9"/><path d="M3 9l2.3 2.6L10 6.3" fill="none" stroke="#e2574c" stroke-width="1.6"/></svg><svg class="abs" style="left:106px;top:50px" width="13" height="16" viewBox="0 0 13 16"><path d="M0.5 0.5h11v15h-11z" fill="#fbe08f"/><path d="M10 9.5h2.5v6h-2.5z" fill="#f3cf6a"/><path d="M0.5 0.5h10.5v8" fill="none" stroke="#f6d67a" stroke-width=".6"/></svg><svg class="abs" style="left:126px;top:56px" width="9" height="7" viewBox="0 0 9 7"><path d="M0.5 0h8v1.4h-8z M1 3h7l-3.5 3.8z" fill="#111"/></svg><div class="abs" style="left:142px;top:51px;width:1px;height:12px;background:#bdbdbd;"></div>
<div class="abs" style="left:271px;top:46px;width:118px;height:27px;background:#e9c9fa;"></div>
<div class="t" style="left:308.0px;top:54.6px;font-size:12px;letter-spacing:-0.31px;color:#3a3340;">Manage</div>
<div class="t" style="left:402.0px;top:52.0px;font-size:12px;letter-spacing:-0.10px;color:#8d8d8d;">Downloads</div>
<div class="abs" style="left:644px;top:57px;width:10px;height:1px;background:#5f5f5f;"></div><div class="abs" style="left:689px;top:52px;width:10px;height:10px;border:1px solid #5f5f5f;"></div><svg class="abs" style="left:734px;top:51px" width="12" height="12" viewBox="0 0 12 12"><path d="M0.7 0.7L11.3 11.3M11.3 0.7L0.7 11.3" stroke="#5f5f5f" stroke-width="1" fill="none"/></svg>
<div class="abs" style="left:42px;top:73px;width:55px;height:23px;background:#0c64b3;"></div>
<div class="t" style="left:60.5px;top:79.6px;font-size:12px;letter-spacing:-0.58px;color:#fff;">File</div>
<div class="abs" style="left:97px;top:73px;width:58px;height:24px;background:#f5f6f7;border:1px solid #dadbdc;border-bottom:none;"></div>
<div class="t" style="left:111.0px;top:79.6px;font-size:12px;letter-spacing:-0.75px;color:#333;">Home</div>
<div class="t" style="left:170.0px;top:79.6px;font-size:12px;letter-spacing:-0.80px;color:#333;">Share</div>
<div class="t" style="left:228.0px;top:79.6px;font-size:12px;letter-spacing:-0.32px;color:#333;">View</div>
<div class="abs" style="left:270px;top:73px;width:1px;height:23px;background:#e4e0e6;"></div>
<div class="abs" style="left:388px;top:73px;width:1px;height:23px;background:#e4e0e6;"></div>
<div class="t" style="left:284.0px;top:79.6px;font-size:12px;letter-spacing:-0.08px;color:#333;">Application Tools</div>
<svg class="abs" style="left:724px;top:80px" width="11" height="7" viewBox="0 0 11 7"><path d="M0.8 6L5.5 1.3 10.2 6" stroke="#9a9a9a" stroke-width="1.3" fill="none"/></svg>
<div class="abs" style="left:743.500px;top:76px;width:16px;height:16px;border-radius:8px;background:#1160b7;color:#fff;font-weight:bold;font-size:12px;line-height:16px;text-align:center">?</div>
<div class="abs" style="left:42px;top:96px;width:721px;height:92px;background:#f5f6f7;border-top:1px solid #dadbdc;border-bottom:1px solid #dadbdc;"></div>
<div class="abs" style="left:155px;top:96px;width:0px;height:0px;"></div>
<div class="abs" style="left:98px;top:96px;width:56px;height:1px;background:#f5f6f7;"></div>
<div class="abs" style="left:226px;top:100px;width:1px;height:84px;background:#e6e7e8;"></div>
<div class="abs" style="left:391px;top:100px;width:1px;height:84px;background:#e6e7e8;"></div>
<div class="abs" style="left:474px;top:100px;width:1px;height:84px;background:#e6e7e8;"></div>
<div class="abs" style="left:574px;top:100px;width:1px;height:84px;background:#e6e7e8;"></div>
<div class="abs" style="left:689px;top:100px;width:1px;height:84px;background:#e6e7e8;"></div>
<div class="abs" style="left:312px;top:106px;width:1px;height:55px;background:#e4e5e6;"></div>
<svg class="abs" style="left:69px;top:109px" width="22" height="21" viewBox="0 0 22 21"><path d="M13 1l7.5 7.5-2 1-2.5-.5-3.5 3.5.3 3-1.8 1.2L3 8.7l1.7-1.5 3 .3L11.5 4 11 2z" fill="#a5b4cc"/><path d="M6.5 13.5L1 20" stroke="#a5b4cc" stroke-width="2.2"/></svg>
<div class="t" style="left:49.0px;top:140.1px;font-size:12px;letter-spacing:-0.27px;color:#7b7b7b;">Pin to Quick</div>
<div class="t" style="left:64.0px;top:153.1px;font-size:12px;letter-spacing:-0.97px;color:#7b7b7b;">access</div>
<svg class="abs" style="left:122px;top:106px" width="26" height="28" viewBox="0 0 26 28"><path d="M1 .5h11l4 4v15h-15z" fill="#fff" stroke="#9a9a9a"/><path d="M3 5h8M3 7.5h10M3 10h10M3 12.5h5M3 15h5" stroke="#b9c8e6" stroke-width="1"/><path d="M9.5 7.5h10.5l4.5 4.5v15.5h-15z" fill="#fff" stroke="#8a8a8a"/><path d="M20 7.5v4.5h4.500" fill="none" stroke="#8a8a8a"/><path d="M12 13.500h10M12 16h10M12 18.500h10M12 21h10M12 23.500h10" stroke="#4a8ad8" stroke-width="1.2"/></svg>
<div class="t" style="left:121.0px;top:140.1px;font-size:12px;letter-spacing:-0.50px;color:#3b3b3b;">Copy</div>
<svg class="abs" style="left:166px;top:104px" width="22" height="30" viewBox="0 0 22 30"><path d="M1 4h20v25.500h-20z" fill="#9aa3bb"/><path d="M3 6.500h16v20.500h-16z" fill="#e2e8f8"/><path d="M7 1.500h8v4h-8z" fill="#a9b1c6"/><circle cx="11" cy="2" r="1.600" fill="#a9b1c6"/><path d="M4 10h14M4 13h14M4 16h14M4 19h14M4 22h14" stroke="#cfd8f0" stroke-width="1"/></svg>
<div class="t" style="left:163.0px;top:140.1px;font-size:12px;letter-spacing:-0.94px;color:#6f6f6f;">Paste</div>
<svg class="abs" style="left:203px;top:104px" width="13" height="17" viewBox="0 0 13 17"><path d="M2.500 0L7.800 11M10.500 0L5.200 11" stroke="#8a8f99" stroke-width="1.100" fill="none"/><ellipse cx="3.300" cy="13.300" rx="2.400" ry="2.600" fill="none" stroke="#2a74c5" stroke-width="1.500"/><ellipse cx="9.700" cy="13.300" rx="2.400" ry="2.600" fill="none" stroke="#2a74c5" stroke-width="1.500"/></svg>
<div class="abs" style="left:201px;top:130px;width:16px;height:9px;background:#bcd9f5;"></div>
<div class="t" style="left:202px;top:129px;font-size:8px;font-weight:bold;color:#1c2c5a;letter-spacing:-.5px">W...</div>
<svg class="abs" style="left:202px;top:148px" width="14" height="16" viewBox="0 0 14 16"><path d="M.5 2h13v13.500h-13z" fill="#9aa3bb"/><path d="M2.500 4h9v9.500h-9z" fill="#e8ecf8"/><path d="M4 .5h6v2.500h-6z" fill="#a9b1c6"/><path d="M5 11V8h4M7.500 6l2 2-2 2" stroke="#3b6fb8" stroke-width="1.300" fill="none"/></svg>
<div class="t" style="left:108.0px;top:173.1px;font-size:12px;letter-spacing:-0.04px;color:#5a5a5a;">Clipboard</div>
<svg class="abs" style="left:236px;top:112px" width="14" height="16" viewBox="0 0 14 16"><path d="M0 0h11.500v16h-11.500z" fill="#fbe08f"/><path d="M0 0h11.500v16" fill="none" stroke="#f0cd6a" stroke-width=".8"/><path d="M13.500 11.500h-5M10.500 8.500v6l-4.500-3z" fill="#2f7ed0" stroke="#2f7ed0" stroke-width="1.600"/></svg>
<div class="t" style="left:253.0px;top:114.1px;font-size:12px;letter-spacing:-0.24px;color:#3b3b3b;">Move to</div>
<svg class="abs" style="left:236px;top:141px" width="15" height="16" viewBox="0 0 15 16"><path d="M0 0h11v16h-11z" fill="#fbe08f"/><path d="M4.500 .500h6l2.500 2.500v8.500h-8.500z" fill="#fff" stroke="#8a8a8a" stroke-width=".9"/><path d="M6.500 4h3M6.500 6h4.500M6.500 8h4.500" stroke="#4a8ad8" stroke-width=".9"/><path d="M2.500 2.500v10.500h8" fill="none" stroke="#9a9a9a" stroke-width=".9"/></svg>
<div class="t" style="left:253.0px;top:143.1px;font-size:12px;letter-spacing:-0.34px;color:#3b3b3b;">Copy to</div>
<svg class="abs" style="left:298px;top:118.5px" width="6" height="4" viewBox="0 0 6 4"><path d="M0 0h6L3 3.500z" fill="#222"/></svg>
<svg class="abs" style="left:296px;top:147.5px" width="6" height="4" viewBox="0 0 6 4"><path d="M0 0h6L3 3.500z" fill="#222"/></svg>
<svg class="abs" style="left:375px;top:118.5px" width="6" height="4" viewBox="0 0 6 4"><path d="M0 0h6L3 3.500z" fill="#222"/></svg>
<svg class="abs" style="left:320px;top:113px" width="15" height="14" viewBox="0 0 15 14"><path d="M1.500 1.500L13 12.500M13 1.500L1.500 12.500" stroke="#d8131f" stroke-width="3.200" fill="none"/></svg>
<div class="t" style="left:338.0px;top:114.1px;font-size:12px;letter-spacing:-0.36px;color:#3b3b3b;">Delete</div>
<svg class="abs" style="left:318px;top:140px" width="18" height="16" viewBox="0 0 18 16"><path d="M.7 4.500h15.500v6.500h-15.500z" fill="#fff" stroke="#8a93a5" stroke-width=".9"/><path d="M2.500 6h6.500v3.500h-6.500z" fill="#3b86d8"/><path d="M10 .700h2M14 .700h-2M12 .700v14.600M10 15.300h4" stroke="#555" stroke-width="1.100" fill="none"/></svg>
<div class="t" style="left:338.0px;top:143.1px;font-size:12px;letter-spacing:-0.81px;color:#3b3b3b;">Rename</div>
<div class="t" style="left:284.5px;top:173.1px;font-size:12px;letter-spacing:-0.34px;color:#5a5a5a;">Organize</div>
<svg class="abs" style="left:405px;top:107px" width="20" height="27" viewBox="0 0 20 27"><defs><linearGradient id="nf" x1="0" x2="1"><stop offset="0" stop-color="#f6d566"/><stop offset=".5" stop-color="#fbe48f"/><stop offset="1" stop-color="#f2ca55"/></linearGradient></defs><path d="M1 1h13l3 2v20l-2 1h-11l-3 2.500z" fill="url(#nf)"/><path d="M1 1l4 2.500v20.500l-4 2.500z" fill="#f9de85"/></svg>
<div class="t" style="left:405.0px;top:140.1px;font-size:12px;letter-spacing:-0.50px;color:#3b3b3b;">New</div>
<div class="t" style="left:400.5px;top:153.1px;font-size:12px;letter-spacing:0.25px;color:#3b3b3b;">folder</div>
<svg class="abs" style="left:440px;top:104px" width="17" height="16" viewBox="0 0 17 16"><path d="M.5 .500h8v7h-8z" fill="#cfe3f7" stroke="#5579a8" stroke-width=".9"/><path d="M3.500 4h8v7h-8z" fill="#fff" stroke="#7a7a7a" stroke-width=".9"/><path d="M8.500 7.500h8v8h-8z" fill="#fff" stroke="#7a7a7a" stroke-width=".9"/><path d="M10 10h5M10 12h5M10 14h5" stroke="#8aa" stroke-width=".8"/></svg>
<svg class="abs" style="left:458.5px;top:110.0px" width="6" height="4" viewBox="0 0 6 4"><path d="M0 0h6L3 3.500z" fill="#222"/></svg>
<svg class="abs" style="left:440px;top:126px" width="17" height="16" viewBox="0 0 17 16"><path d="M4.500 .500h8l3.500 3.500v11.500h-11.500z" fill="#fff" stroke="#6a6a6a" stroke-width=".9"/><path d="M0 4.500h7M1.500 7h6M0 9.500h5" stroke="#1f5fae" stroke-width="1.200"/></svg>
<svg class="abs" style="left:458.5px;top:132.0px" width="6" height="4" viewBox="0 0 6 4"><path d="M0 0h6L3 3.500z" fill="#222"/></svg>
<div class="t" style="left:420.0px;top:173.1px;font-size:12px;letter-spacing:-0.50px;color:#5a5a5a;">New</div>
<svg class="abs" style="left:495px;top:106px" width="23" height="29" viewBox="0 0 23 29"><path d="M1 .500h15.500l5.500 5.500v22h-21z" fill="#fff" stroke="#8a8a8a"/><path d="M16.500 .500v5.500h5.500" fill="none" stroke="#8a8a8a"/><path d="M4.500 15.500l5 5.500 9.500-10.500" fill="none" stroke="#e8602c" stroke-width="2.600"/></svg>
<div class="t" style="left:481.0px;top:140.1px;font-size:12px;letter-spacing:-0.37px;color:#3b3b3b;">Properties</div>
<svg class="abs" style="left:503.3px;top:157.0px" width="6" height="4" viewBox="0 0 6 4"><path d="M0 0h6L3 3.500z" fill="#222"/></svg>
<svg class="abs" style="left:538px;top:106px" width="18" height="12" viewBox="0 0 18 12"><path d="M.500 .500h16.500v11h-16.500z" fill="#fff" stroke="#6d6d6d"/><path d="M.500 .500h16.500v2h-16.500z" fill="#5d6d85"/><path d="M5 4.500h4v5h-4z" fill="#1c6fd0"/><path d="M10.500 5h4.500M10.500 7h4.500M10.500 9h4.500" stroke="#9ab" stroke-width=".8"/></svg>
<svg class="abs" style="left:558.5px;top:110.0px" width="6" height="4" viewBox="0 0 6 4"><path d="M0 0h6L3 3.500z" fill="#222"/></svg>
<svg class="abs" style="left:541px;top:126px" width="15" height="16" viewBox="0 0 15 16"><path d="M.500 .500h8.500l3.500 3.500v11.500h-12z" fill="#e6ebf5" stroke="#c3cbdc"/><path d="M4 12l8.500-9 1.500 1.500-8.500 9z" fill="#cfd6e6"/></svg>
<svg class="abs" style="left:538px;top:148px" width="18" height="17" viewBox="0 0 18 17"><path d="M0 0h11v13h-11z" fill="#f7d86a"/><circle cx="11.500" cy="10.500" r="5.300" fill="#f4f4f4" stroke="#8a8a8a" stroke-width="1.200"/><path d="M11.500 7v3.500l2.500-1.500" stroke="#666" stroke-width=".9" fill="none"/><path d="M3 10l4-3.500v2.500c2 0 3.500 1 4 3-1.500-1-2.500-1.200-4-1v2.500z" fill="#3a9a3a"/></svg>
<div class="t" style="left:509.0px;top:173.1px;font-size:12px;letter-spacing:-0.34px;color:#5a5a5a;">Open</div>
<svg class="abs" style="left:582px;top:104px" width="16" height="16" viewBox="0 0 16 16"><rect x="0.6" y="0.6" width="6.800" height="6.800" fill="#a9d6fb" stroke="#2d86d6" stroke-width="1.300"/><rect x="9.1" y="0.6" width="6.800" height="6.800" fill="#a9d6fb" stroke="#2d86d6" stroke-width="1.300"/><rect x="0.6" y="9.1" width="6.800" height="6.800" fill="#a9d6fb" stroke="#2d86d6" stroke-width="1.300"/><rect x="9.1" y="9.1" width="6.800" height="6.800" fill="#a9d6fb" stroke="#2d86d6" stroke-width="1.300"/></svg>
<svg class="abs" style="left:582px;top:126px" width="16" height="16" viewBox="0 0 16 16"><rect x="1.2" y="1.2" width="5.5" height="5.5" fill="#fcfcfc" stroke="#a8a8a8" stroke-width=".9"/><rect x="9.7" y="1.2" width="5.5" height="5.5" fill="#fcfcfc" stroke="#a8a8a8" stroke-width=".9"/><rect x="1.2" y="9.7" width="5.5" height="5.5" fill="#fcfcfc" stroke="#a8a8a8" stroke-width=".9"/><rect x="9.7" y="9.7" width="5.5" height="5.5" fill="#fcfcfc" stroke="#a8a8a8" stroke-width=".9"/></svg>
<svg class="abs" style="left:582px;top:148px" width="16" height="16" viewBox="0 0 16 16"><rect x="1.2" y="1.2" width="5.5" height="5.5" fill="#fcfcfc" stroke="#a8a8a8" stroke-width=".9"/><rect x="9.1" y="0.6" width="6.800" height="6.800" fill="#a9d6fb" stroke="#2d86d6" stroke-width="1.300"/><rect x="0.6" y="9.1" width="6.800" height="6.800" fill="#a9d6fb" stroke="#2d86d6" stroke-width="1.300"/><rect x="9.7" y="9.7" width="5.5" height="5.5" fill="#fcfcfc" stroke="#a8a8a8" stroke-width=".9"/></svg>
<div class="t" style="left:601.0px;top:106.1px;font-size:12px;letter-spacing:-0.42px;color:#3b3b3b;">Select all</div>
<div class="t" style="left:601.0px;top:128.1px;font-size:12px;letter-spacing:-0.35px;color:#3b3b3b;">Select none</div>
<div class="t" style="left:601.0px;top:150.1px;font-size:12px;letter-spacing:-0.23px;color:#3b3b3b;">Invert selection</div>
<div class="t" style="left:616.0px;top:173.1px;font-size:12px;letter-spacing:-0.64px;color:#5a5a5a;">Select</div>
<svg class="abs" style="left:54px;top:203.5px" width="12" height="11" viewBox="0 0 12 11"><path d="M11.500 5.500H1M5.500 1L1 5.500 5.500 10" stroke="#dcdcdc" stroke-width="1.300" fill="none"/></svg>
<svg class="abs" style="left:84px;top:203.5px" width="12" height="11" viewBox="0 0 12 11"><path d="M.500 5.500H11M6.500 1L11 5.500 6.500 10" stroke="#dcdcdc" stroke-width="1.300" fill="none"/></svg>
<svg class="abs" style="left:110px;top:206px" width="8" height="5" viewBox="0 0 8 5"><path d="M.700 .700L4 4 7.300 .700" stroke="#dedede" stroke-width="1.100" fill="none"/></svg>
<svg class="abs" style="left:128px;top:203px" width="12" height="13" viewBox="0 0 12 13"><path d="M6 12.500V1.200M1 6L6 1.200 11 6" stroke="#666" stroke-width="1.500" fill="none"/></svg>
<div class="abs" style="left:147px;top:194px;width:328px;height:30px;background:#fff;border:1px solid #d9d9d9;"></div>
<div class="abs" style="left:444px;top:194px;width:1px;height:30px;background:#d9d9d9;"></div>
<svg class="abs" style="left:152px;top:200px" width="13" height="16" viewBox="0 0 13 16"><path d="M0.5 0.5h11v15h-11z" fill="#fbe08f"/><path d="M10 9.5h2.5v6h-2.5z" fill="#f3cf6a"/><path d="M0.5 0.5h10.5v8" fill="none" stroke="#f6d67a" stroke-width=".6"/></svg>
<div class="t" style="left:170.500px;top:201px;font-size:13px;color:#222;letter-spacing:-1px">«</div>
<div class="t" style="left:187.5px;top:202.8px;font-size:12px;letter-spacing:-0.77px;color:#222;">Users</div>
<div class="t" style="left:238.0px;top:202.8px;font-size:12px;letter-spacing:-0.75px;color:#222;">LENOVO</div>
<div class="t" style="left:307.0px;top:202.8px;font-size:12px;letter-spacing:-0.10px;color:#222;">Downloads</div>
<svg class="abs" style="left:224px;top:205.5px" width="5" height="7" viewBox="0 0 5 7"><path d="M.800 .700L3.800 3.500 .800 6.300" stroke="#777" stroke-width="1.100" fill="none"/></svg>
<svg class="abs" style="left:294px;top:205.5px" width="5" height="7" viewBox="0 0 5 7"><path d="M.800 .700L3.800 3.500 .800 6.300" stroke="#777" stroke-width="1.100" fill="none"/></svg>
<svg class="abs" style="left:425px;top:207px" width="10" height="7" viewBox="0 0 10 7"><path d="M1 1l4 4.200L9 1" stroke="#666" stroke-width="1.600" fill="none"/></svg>
<svg class="abs" style="left:454px;top:203px" width="12" height="14" viewBox="0 0 12 14"><path d="M9.700 3.900A4.800 4.800 0 1 1 6 2.400" stroke="#666" stroke-width="1.400" fill="none"/><path d="M2.700 1.600H6.300V5.300" stroke="#666" stroke-width="1.400" fill="none"/></svg>
<div class="abs" style="left:487px;top:194px;width:264px;height:30px;background:#fff;border:1px solid #d9d9d9;"></div>
<svg class="abs" style="left:502px;top:202px" width="13" height="13" viewBox="0 0 13 13"><circle cx="8" cy="5" r="4" stroke="#777" stroke-width="1.100" fill="none"/><path d="M5 8L.800 12.200" stroke="#777" stroke-width="1.200"/></svg>
<div class="t" style="left:528.0px;top:202.8px;font-size:12px;letter-spacing:-0.26px;color:#6d6d6d;">Search Downloads</div>
<svg class="abs" style="left:47px;top:247px" width="11" height="7" viewBox="0 0 11 7"><path d="M.600 .600L5.500 6 10.400 .600" stroke="#6d6d6d" stroke-width="1.100" fill="none"/></svg>
<div class="t" style="left:62.7px;top:242.4px;font-size:14.7px;letter-spacing:-0.08px;color:#1e3287;">Today (2)</div>
<div class="abs" style="left:131px;top:250px;width:607px;height:1px;background:#e2e2e2;"></div>
<svg class="abs" style="left:47px;top:394px" width="11" height="7" viewBox="0 0 11 7"><path d="M.600 .600L5.500 6 10.400 .600" stroke="#6d6d6d" stroke-width="1.100" fill="none"/></svg>
<div class="t" style="left:62.7px;top:389.0px;font-size:14.7px;letter-spacing:-0.24px;color:#1e3287;">Last week (18)</div>
<div class="abs" style="left:164px;top:397px;width:574px;height:1px;background:#e2e2e2;"></div>
<svg class="abs" style="left:55px;top:268px" width="105" height="90" viewBox="0 0 105 90"><defs><linearGradient id="gra" x1="0" x2="0" y1="0" y2="1"><stop offset="0" stop-color="#e63a5c"/><stop offset=".5" stop-color="#cf2148"/><stop offset="1" stop-color="#9c0e30"/></linearGradient><linearGradient id="gba" x1="0" x2="0" y1="0" y2="1"><stop offset="0" stop-color="#5a55e6"/><stop offset=".5" stop-color="#4039cc"/><stop offset="1" stop-color="#27228f"/></linearGradient><linearGradient id="gga" x1="0" x2="0" y1="0" y2="1"><stop offset="0" stop-color="#25b84e"/><stop offset=".5" stop-color="#11953a"/><stop offset="1" stop-color="#086424"/></linearGradient><linearGradient id="gbelta" x1="0" x2="1"><stop offset="0" stop-color="#a85a0c"/><stop offset=".18" stop-color="#dd8a22"/><stop offset=".5" stop-color="#e89a30"/><stop offset=".82" stop-color="#d27c18"/><stop offset="1" stop-color="#9c5008"/></linearGradient><linearGradient id="gtipa" x1="0" x2="1"><stop offset="0" stop-color="#b05e0c"/><stop offset=".2" stop-color="#dc8824"/><stop offset=".8" stop-color="#d27e1a"/><stop offset="1" stop-color="#a2540a"/></linearGradient></defs><rect x="6.400" y="7.6" width="91" height="25.2" rx="5" fill="url(#gra)"/><rect x="12.300" y="12.1" width="4" height="16.2" rx="1" fill="#f0b92a"/><rect x="6.400" y="32.2" width="91" height="25.6" rx="5" fill="url(#gba)"/><rect x="12.300" y="36.7" width="4" height="16.6" rx="1" fill="#f0b92a"/><rect x="6.400" y="57.4" width="91" height="25.6" rx="5" fill="url(#gga)"/><rect x="12.300" y="61.9" width="4" height="16.6" rx="1" fill="#f0b92a"/><rect x="39.800" y="5.900" width="24.200" height="78" rx="2" fill="url(#gbelta)"/><path d="M43 17c3-6 15-6 18 0" fill="none" stroke="#f6c46a" stroke-width="1.400"/><rect x="37.500" y="39" width="29" height="19.500" rx="2.500" fill="none" stroke="#e4e6ee" stroke-width="3.600"/><path d="M36 58.500h32" stroke="#c9ccd8" stroke-width="1"/><path d="M39.400 24h25v28a3.500 3.500 0 0 1-3.500 3.500h-18a3.500 3.500 0 0 1-3.500-3.500z" fill="url(#gtipa)" stroke="#a85a0c" stroke-width=".7"/><path d="M39.400 24h25" stroke="#8a4a08" stroke-width="1.200"/><circle cx="51.600" cy="35.800" r="1.500" fill="#7a3c06"/><rect x="49.800" y="48.500" width="3.800" height="9.500" rx="1.900" fill="#eef0f6" stroke="#9aa0b4" stroke-width=".6"/></svg>
<svg class="abs" style="left:170px;top:268px" width="105" height="90" viewBox="0 0 105 90"><defs><linearGradient id="grb" x1="0" x2="0" y1="0" y2="1"><stop offset="0" stop-color="#e63a5c"/><stop offset=".5" stop-color="#cf2148"/><stop offset="1" stop-color="#9c0e30"/></linearGradient><linearGradient id="gbb" x1="0" x2="0" y1="0" y2="1"><stop offset="0" stop-color="#5a55e6"/><stop offset=".5" stop-color="#4039cc"/><stop offset="1" stop-color="#27228f"/></linearGradient><linearGradient id="ggb" x1="0" x2="0" y1="0" y2="1"><stop offset="0" stop-color="#25b84e"/><stop offset=".5" stop-color="#11953a"/><stop offset="1" stop-color="#086424"/></linearGradient><linearGradient id="gbeltb" x1="0" x2="1"><stop offset="0" stop-color="#a85a0c"/><stop offset=".18" stop-color="#dd8a22"/><stop offset=".5" stop-color="#e89a30"/><stop offset=".82" stop-color="#d27c18"/><stop offset="1" stop-color="#9c5008"/></linearGradient><linearGradient id="gtipb" x1="0" x2="1"><stop offset="0" stop-color="#b05e0c"/><stop offset=".2" stop-color="#dc8824"/><stop offset=".8" stop-color="#d27e1a"/><stop offset="1" stop-color="#a2540a"/></linearGradient></defs><rect x="6.400" y="7.6" width="91" height="25.2" rx="5" fill="url(#grb)"/><rect x="12.300" y="12.1" width="4" height="16.2" rx="1" fill="#f0b92a"/><rect x="6.400" y="32.2" width="91" height="25.6" rx="5" fill="url(#gbb)"/><rect x="12.300" y="36.7" width="4" height="16.6" rx="1" fill="#f0b92a"/><rect x="6.400" y="57.4" width="91" height="25.6" rx="5" fill="url(#ggb)"/><rect x="12.300" y="61.9" width="4" height="16.6" rx="1" fill="#f0b92a"/><rect x="39.800" y="5.900" width="24.200" height="78" rx="2" fill="url(#gbeltb)"/><path d="M43 17c3-6 15-6 18 0" fill="none" stroke="#f6c46a" stroke-width="1.400"/><rect x="37.500" y="39" width="29" height="19.500" rx="2.500" fill="none" stroke="#e4e6ee" stroke-width="3.600"/><path d="M36 58.500h32" stroke="#c9ccd8" stroke-width="1"/><path d="M39.400 24h25v28a3.500 3.500 0 0 1-3.500 3.500h-18a3.500 3.500 0 0 1-3.500-3.500z" fill="url(#gtipb)" stroke="#a85a0c" stroke-width=".7"/><path d="M39.400 24h25" stroke="#8a4a08" stroke-width="1.200"/><circle cx="51.600" cy="35.800" r="1.500" fill="#7a3c06"/><rect x="49.800" y="48.500" width="3.800" height="9.500" rx="1.900" fill="#eef0f6" stroke="#9aa0b4" stroke-width=".6"/></svg>
<div class="t" style="left:89.7px;top:364.5px;font-size:12px;letter-spacing:-0.23px;color:#1a1a1a;">File (1)</div>
<div class="t" style="left:214.0px;top:364.5px;font-size:12px;letter-spacing:-0.21px;color:#1a1a1a;">File</div>
<div class="abs" style="left:55px;top:412px;width:105px;height:18px;background:#d6d6d6;"></div>
<svg class="abs" style="left:55px;top:412px" width="105" height="18" viewBox="0 0 105 18"><path d="M8 18l6-9 30-5 22 4-6 10z" fill="#a9cdf5"/><path d="M40 6l20 3 4 9h-22z" fill="#c4c9f2"/><path d="M62 9l12-3 6 4-4 8h-12z" fill="#fff"/></svg>
<div class="abs" style="left:746px;top:231px;width:17px;height:199px;background:#f0f0f0;"></div>
<div class="abs" style="left:746px;top:248px;width:17px;height:22px;background:#cdcdcd;"></div>
<svg class="abs" style="left:750px;top:236px" width="9" height="6" viewBox="0 0 9 6"><path d="M.800 5L4.500 1.300 8.200 5" stroke="#555" stroke-width="1.400" fill="none"/></svg>
<svg class="abs" style="left:750px;top:418px" width="9" height="6" viewBox="0 0 9 6"><path d="M.800 1L4.500 4.700 8.200 1" stroke="#555" stroke-width="1.400" fill="none"/></svg>
<div class="t" style="left:55.0px;top:435.9px;font-size:12px;letter-spacing:-0.22px;color:#2b2b2b;">105 items</div>
<div class="abs" style="left:115px;top:433px;width:1px;height:17px;background:#eee;"></div>
<div class="t" style="left:126.0px;top:435.9px;font-size:12px;letter-spacing:-0.25px;color:#2b2b2b;">1 item selected</div>
<div class="t" style="left:211.0px;top:435.9px;font-size:12px;letter-spacing:-0.41px;color:#2b2b2b;">7.85 MB</div>
<svg class="abs" style="left:718px;top:434px" width="17" height="14" viewBox="0 0 17 14"><g fill="none" stroke="#8a8a8a" stroke-width=".9"><rect x=".500" y=".500" width="3" height="3"/><rect x=".500" y="5.500" width="3" height="3"/><rect x=".500" y="10.500" width="3" height="3"/></g><path d="M6 2h4M12 2h4M6 7h4M12 7h4M6 12h4M12 12h4" stroke="#777" stroke-width="1.100"/></svg>
<div class="abs" style="left:737px;top:431px;width:21px;height:21px;background:#cce8ff;border:1px solid #66b3ef;"></div>
<svg class="abs" style="left:741px;top:436px" width="14" height="11" viewBox="0 0 14 11"><rect x=".500" y=".500" width="13" height="10" fill="#fff" stroke="#555"/><rect x="2" y="2" width="10" height="7" fill="#3f78c0"/><path d="M2 9l4-3 3 2 3-2v3z" fill="#bcd6f2"/></svg></div>
<div id="toast"><div class="abs" style="left:986px;top:605px;width:364px;height:111px;background:#e4e4e4;"></div>
<div class="t" style="left:1026.0px;top:625.8px;font-size:12.5px;letter-spacing:-0.11px;color:#1a1a1a;">Audio</div>
<svg class="abs" style="left:1317px;top:626.500px" width="10" height="10" viewBox="0 0 10 10"><path d="M.500 .500L9.500 9.500M9.500 .500L.500 9.500" stroke="#444" stroke-width="1"/></svg>
<div class="t" style="left:1001.7px;top:659.0px;font-size:14.7px;letter-spacing:-0.34px;color:#111;font-weight:bold;">Are you having sound problems?</div>
<div class="t" style="left:1001.7px;top:679.0px;font-size:14.7px;letter-spacing:0.22px;color:#6b6b6b;">Open the Audio Troubleshooter.</div></div>
<div id="tbar"><div class="abs" style="left:0px;top:728px;width:1366px;height:40px;background:#eaeaea;"></div>
<svg class="abs" style="left:16px;top:740px" width="16" height="16" viewBox="0 0 16 16"><path d="M0 2.300l6.500-.900v6.300H0zM7.300 1.300L16 0v7.700H7.300zM0 8.500h6.500v6.300L0 13.900zM7.300 8.500H16V16l-8.700-1.200z" fill="#000"/></svg>
<div class="abs" style="left:48px;top:728px;width:344px;height:40px;background:#fff;border:1px solid #9f9f9f;"></div>
<svg class="abs" style="left:60px;top:740px" width="17" height="17" viewBox="0 0 17 17"><circle cx="10.300" cy="6.300" r="5.200" stroke="#222" stroke-width="1.500" fill="none"/><path d="M6.500 10.300L.800 16" stroke="#222" stroke-width="1.600"/></svg>
<div class="t" style="left:89.3px;top:739.9px;font-size:15px;letter-spacing:-0.36px;color:#3b3b3b;">Type here to search</div>
<svg class="abs" style="left:325px;top:733px" width="56" height="32" viewBox="0 0 56 32"><path d="M2 31c4-12 12-17 22-14v14z" fill="#7cc37c"/><path d="M10 31c6-9 14-10 20-6v6z" fill="#a9d9a0"/><path d="M12 1l1.800 4 4 1.800-4 1.800L12 12.600l-1.800-4-4-1.800 4-1.800z" fill="#f2b81c"/><rect x="24" y="6" width="26" height="24" rx="3" fill="#e9e9ee"/><path d="M24 9a3 3 0 0 1 3-3h20a3 3 0 0 1 3 3v4H24z" fill="#3b6fd8"/><path d="M30 3v6M44 3v6" stroke="#3b6fd8" stroke-width="2"/><path d="M46 14a7 7 0 0 1 7 7c0 5-7 11-7 11s-7-6-7-11a7 7 0 0 1 7-7z" fill="#e85a1c"/><circle cx="46" cy="21" r="2.800" fill="#fff"/></svg>
<div class="abs" style="left:408px;top:740px;width:16px;height:16px;border-radius:8px;border:2.500px solid #111"></div>
<svg class="abs" style="left:455px;top:739.500px" width="18" height="16" viewBox="0 0 21 18"><path d="M2 .700h12M2 17.300h12" stroke="#111" stroke-width="1.700"/><rect x="1.700" y="4.500" width="12.600" height="9" fill="none" stroke="#111" stroke-width="1.700"/><path d="M18.500 .500v5M18.500 7v3M18.500 11.500v6" stroke="#111" stroke-width="2"/></svg>
<div class="abs" style="left:539px;top:728px;width:43px;height:40px;background:#f7f7f7;"></div>
<div class="abs" style="left:867px;top:728px;width:47px;height:40px;background:#f3f3f3;"></div>
<div class="abs" style="left:539px;top:766px;width:46px;height:2px;background:#0078d7;"></div>
<div class="abs" style="left:825px;top:766px;width:38px;height:2px;background:#0078d7;"></div>
<div class="abs" style="left:919px;top:766px;width:38px;height:2px;background:#0078d7;"></div>
<div class="abs" style="left:966px;top:766px;width:38px;height:2px;background:#0078d7;"></div>
<svg class="abs" style="left:501.500px;top:735px" width="25.500" height="25.500" viewBox="0 0 25 25"><defs><linearGradient id="eg" x1="0" y1="0" x2=".6" y2="1"><stop offset="0" stop-color="#2aa6e6"/><stop offset=".55" stop-color="#1678c8"/><stop offset="1" stop-color="#0c4f9c"/></linearGradient><linearGradient id="eg2" x1="0" y1=".6" x2="1" y2=".2"><stop offset="0" stop-color="#2bb3e8"/><stop offset=".5" stop-color="#36c5b8"/><stop offset="1" stop-color="#5fd060"/></linearGradient></defs><circle cx="12.500" cy="12.500" r="12.300" fill="url(#eg)"/><path d="M14.200 15.200c0-2 1.800-3.400 4-3.400h7v5.200c-1.800 1.600-4 2.300-6.500 2.300-2.600 0-4.500-1.800-4.500-4.100z" fill="#eaeaea"/><path d="M.300 11.500C1 5 6 .200 12.500 .200c7 0 12.300 5.300 12.300 11 0 3.600-2.600 5.600-5.600 5.600-2.500 0-4.200-1-4.200-2.400 0-.9 1.100-1.400 1.100-3.100 0-2.600-2.600-4.500-5.800-4.500C6 6.800 1.800 9 .300 11.500z" fill="url(#eg2)"/><path d="M9.500 12c-1.500 5.500 3 11 10.500 9.800-4.500 3.800-12 2.800-15.300-2.600C2.500 15 4.500 10.500 9.500 12z" fill="#0b4a92" opacity=".55"/></svg>
<svg class="abs" style="left:549px;top:738px" width="23" height="20" viewBox="0 0 25 22"><path d="M1 1.500h8.500l2 3h12.500v5H1z" fill="#e9a21a"/><path d="M0 5.500h25v14.500a1 1 0 0 1-1 1H1a1 1 0 0 1-1-1z" fill="#fbd566"/><path d="M5.500 13h14v8.500h-14z" fill="#3b8ad6"/><path d="M9 17h7v4.500H9z" fill="#fbd566"/></svg>
<svg class="abs" style="left:596px;top:735px" width="24" height="26" viewBox="0 0 24 26"><path d="M7.500 6V3.500A2 2 0 0 1 9.500 1.500h5a2 2 0 0 1 2 2V6" stroke="#1e68b8" stroke-width="1.800" fill="none"/><rect x=".500" y="6" width="23" height="19.500" rx="2" fill="#10427e"/><rect x="7" y="10.500" width="4.600" height="4.600" fill="#f25022"/><rect x="12.400" y="10.500" width="4.600" height="4.600" fill="#7fba00"/><rect x="7" y="15.900" width="4.600" height="4.600" fill="#00a4ef"/><rect x="12.400" y="15.900" width="4.600" height="4.600" fill="#ffb900"/></svg>
<svg class="abs" style="left:643px;top:736px" width="26" height="23" viewBox="0 0 26 23"><path d="M0 8.500L13 0l13 8.500V23H0z" fill="#1473c8"/><path d="M2.500 6.500h21V16h-21z" fill="#fff"/><path d="M0 8.500l13 8 13-8V23H0z" fill="#2c95e8"/></svg>
<div class="abs" style="left:660px;top:747px;width:19px;height:16px;border-radius:8px;background:#d9d9d9;border:1px solid #777;font-size:11px;line-height:14px;text-align:center;color:#111;font-weight:bold">61</div>
<div class="abs" style="left:691px;top:736px;width:24px;height:24px;background:#18a2dc;"></div>
<svg class="abs" style="left:691px;top:736px" width="24" height="24" viewBox="0 0 24 24"><path d="M9.500 3.500h4v13h6v3.500h-10z" fill="#fff"/><path d="M5.500 20l4-9.500v9.500z" fill="#0f3d6e"/></svg>
<div class="abs" style="left:738px;top:736px;width:24px;height:24px;background:#f08a24;"></div>
<svg class="abs" style="left:738px;top:736px" width="24" height="24" viewBox="0 0 24 24"><path d="M6 15c0-4 3-8 7-8 3 0 5 2 5 5 0 4-3 6-7 6-2 0-4 0-5-3z" fill="#1a1a1a"/><circle cx="11" cy="11" r="1.300" fill="#f08a24"/><circle cx="15" cy="11" r="1.300" fill="#f08a24"/><path d="M4 17c3 2 9 3 14 0" stroke="#1a1a1a" stroke-width="2" fill="none"/></svg>
<svg class="abs" style="left:784px;top:736px" width="24" height="24" viewBox="0 0 46 46"><defs><radialGradient id="ffs" cx=".7" cy=".2" r="1"><stop offset="0" stop-color="#fff36b"/><stop offset=".3" stop-color="#ffb01f"/><stop offset=".65" stop-color="#ff5a2a"/><stop offset="1" stop-color="#e82a6a"/></radialGradient></defs><path d="M23 3c3-2 7-2 9-3 0 3 2 5 5 7 5 4 9 10 9 17a23 22 0 0 1-46 0c0-6 2-11 5-14 0 2 1 4 2 5 1-5 5-9 9-11 1 0 4 0 7-1z" fill="url(#ffs)"/><circle cx="24" cy="25" r="11.500" fill="#7a3fe0"/><path d="M12 17c4-3 10-3 14 0-4 0-6 2-6 4 3 0 6 1 7 3-3 4-10 5-14 1-2-2-2-6-1-8z" fill="#ff8a1f"/></svg>
<svg class="abs" style="left:831px;top:736px" width="26" height="26" viewBox="0 0 52 52"><circle cx="24" cy="24" r="24" fill="#fbc116"/><path d="M24 12h20.800A24 24 0 0 0 3.200 12L13.600 30z" fill="#e33b2e"/><path d="M3.200 12l10.400 18L24 48A24 24 0 0 1 3.200 12z" fill="#2ba24c"/><circle cx="24" cy="24" r="11" fill="#fff"/><circle cx="24" cy="24" r="8.800" fill="#3b7ded"/><circle cx="36" cy="37" r="14" fill="#7d9a7a"/><path d="M24 40c2-8 8-12 12-12s10 4 12 12v8H24z" fill="#c9d8c0"/><path d="M30 38h3v10h-3zM39 38h3v10h-3z" fill="#4a5a48"/></svg>
<svg class="abs" style="left:878px;top:736px" width="24" height="24" viewBox="0 0 24 24"><defs><radialGradient id="sp" cx=".4" cy=".3" r=".8"><stop offset="0" stop-color="#7ab6e8"/><stop offset="1" stop-color="#2a6cb0"/></radialGradient></defs><circle cx="12" cy="12" r="12" fill="url(#sp)"/><path d="M13 5.500H5.500L10 11.500 5.500 17.500H13" stroke="#fff" stroke-width="1.600" fill="none"/><text x="14" y="11" font-size="8" fill="#fff" font-family="'Liberation Serif',serif" font-style="italic">α</text><path d="M16 16.500h5M18.500 14v5" stroke="#fff" stroke-width="1"/></svg>
<svg class="abs" style="left:929px;top:738px" width="18.500" height="19" viewBox="0 0 20 22"><path d="M10 .500c3 2 6 2.500 9.500 2.500 0 9-2 15-9.500 18.500C2.500 18 .500 12 .500 3 4 3 7 2.500 10 .500z" fill="#111"/><path d="M10 .500v21M.800 10.500h18.400" stroke="#fff" stroke-width="1.400"/></svg>
<svg class="abs" style="left:973px;top:735px" width="24" height="26" viewBox="0 0 24 26"><rect x="0" y="1" width="24" height="8" rx="1.500" fill="#b8192f"/><rect x="0" y="9.300" width="24" height="8" rx="1.500" fill="#3a35b5"/><rect x="0" y="17.600" width="24" height="8" rx="1.500" fill="#128a38"/><rect x="2" y="3" width="1.500" height="4" fill="#f5c52a"/><rect x="2" y="11.300" width="1.500" height="4" fill="#f5c52a"/><rect x="2" y="19.600" width="1.500" height="4" fill="#f5c52a"/><rect x="8.500" y="0" width="7" height="26" fill="#e0922a"/><rect x="7.500" y="10" width="9" height="7" fill="none" stroke="#eee" stroke-width="1.600"/></svg>
<svg class="abs" style="left:1023px;top:738px" width="26" height="17" viewBox="0 0 26 17"><defs><linearGradient id="cl" x1="0" y1="0" x2="0" y2="1"><stop offset="0" stop-color="#c8dcf8"/><stop offset="1" stop-color="#9fc0ee"/></linearGradient></defs><path d="M6 16.500a5.500 5.500 0 0 1-.500-11 7 7 0 0 1 13.500 1 5 5 0 0 1 1 10z" fill="url(#cl)" stroke="#b5cdf0" stroke-width=".6"/></svg><div class="t" style="left:1056.0px;top:740.3px;font-size:14.5px;letter-spacing:-0.85px;color:#1a1a1a;">25°C</div><svg class="abs" style="left:1111px;top:744px" width="13" height="8" viewBox="0 0 13 8"><path d="M.800 7L6.500 1.300 12.200 7" stroke="#111" stroke-width="1.400" fill="none"/></svg><svg class="abs" style="left:1135px;top:739px" width="14" height="18" viewBox="0 0 14 18"><path d="M3 1.500a6 6 0 0 1 6 0M3 16.500a6 6 0 0 0 6 0" stroke="#222" stroke-width="1" fill="none"/><rect x=".800" y="5" width="8.500" height="8" rx="1.500" fill="none" stroke="#111" stroke-width="1.300"/><path d="M9.500 8l3.500-2v6l-3.500-2z" fill="none" stroke="#111" stroke-width="1.200"/></svg><svg class="abs" style="left:1156px;top:741px" width="18" height="15" viewBox="0 0 18 15"><path d="M4 10.500a3.500 3.500 0 0 1 0-7 5 5 0 0 1 9.500 1 3 3 0 0 1 1 6z" fill="#555"/><circle cx="12.500" cy="10" r="4.500" fill="#777" stroke="#eaeaea" stroke-width="1"/><path d="M11.300 8v4M13.700 8v4" stroke="#fff" stroke-width="1.100"/></svg><svg class="abs" style="left:1180px;top:742px" width="18" height="12" viewBox="0 0 18 12"><rect x="4.500" y="2.500" width="11.500" height="7.500" fill="none" stroke="#111" stroke-width="1.200"/><rect x="6" y="4" width="6" height="4.500" fill="#111"/><path d="M16.500 4.500h1.200v3.500h-1.200z" fill="#111"/><path d="M1 1v2.500M3.500 1v2.500M0 3.500h4.500v2a2.200 2.200 0 0 1-4.500 0zM2.200 7.500v3" stroke="#111" stroke-width="1" fill="#111"/></svg><svg class="abs" style="left:1206px;top:740px" width="16" height="16" viewBox="0 0 16 16"><path d="M1 15A14 14 0 0 1 15 1" stroke="#555" stroke-width="1.300" fill="none"/><path d="M5 15A10 10 0 0 1 15 5" stroke="#555" stroke-width="1.300" fill="none"/><path d="M9 15A6 6 0 0 1 15 9" stroke="#555" stroke-width="1.300" fill="none"/><circle cx="13.500" cy="13.500" r="1.600" fill="#111"/></svg><svg class="abs" style="left:1229px;top:740px" width="18" height="16" viewBox="0 0 18 16"><path d="M.800 5.500h3L8 1.500v13l-4.200-4h-3z" fill="none" stroke="#111" stroke-width="1.200"/><path d="M10.500 5.500a3.500 3.500 0 0 1 0 5M12.800 3.500a6.500 6.500 0 0 1 0 9M15 1.500a9.500 9.500 0 0 1 0 13" stroke="#111" stroke-width="1.100" fill="none"/></svg><div class="t" style="left:1260.0px;top:732.3px;font-size:12px;letter-spacing:-0.38px;color:#1a1a1a;">8:36 PM</div><div class="t" style="left:1255.0px;top:750.4px;font-size:12px;letter-spacing:-0.11px;color:#1a1a1a;">11/7/2022</div><svg class="abs" style="left:1325px;top:739px" width="17" height="16" viewBox="0 0 17 16"><path d="M0 0h17v12H7l-3.500 4v-4H0z" fill="#111"/><path d="M3 3.500h11M3 6h11M3 8.500h11" stroke="#eaeaea" stroke-width="1"/></svg><div class="abs" style="left:1331px;top:747px;width:19px;height:16px;border-radius:8px;background:#d4d4d4;border:1px solid #888;font-size:11px;line-height:14px;text-align:center;color:#222">19</div>
<div class="abs" style="left:1361px;top:728px;width:1px;height:40px;background:#9a9a9a;"></div>
<div class="abs" style="left:828px;top:708px;width:126px;height:20px;background:#fff;border:1px solid #767676;box-shadow:2px 2px 3px rgba(0,0,0,.45);"></div>
<div class="t" style="left:834.0px;top:711.3px;font-size:12px;letter-spacing:-0.51px;color:#575757;">IBM SPSS Statistics 26</div></div>
</body>
</html>
